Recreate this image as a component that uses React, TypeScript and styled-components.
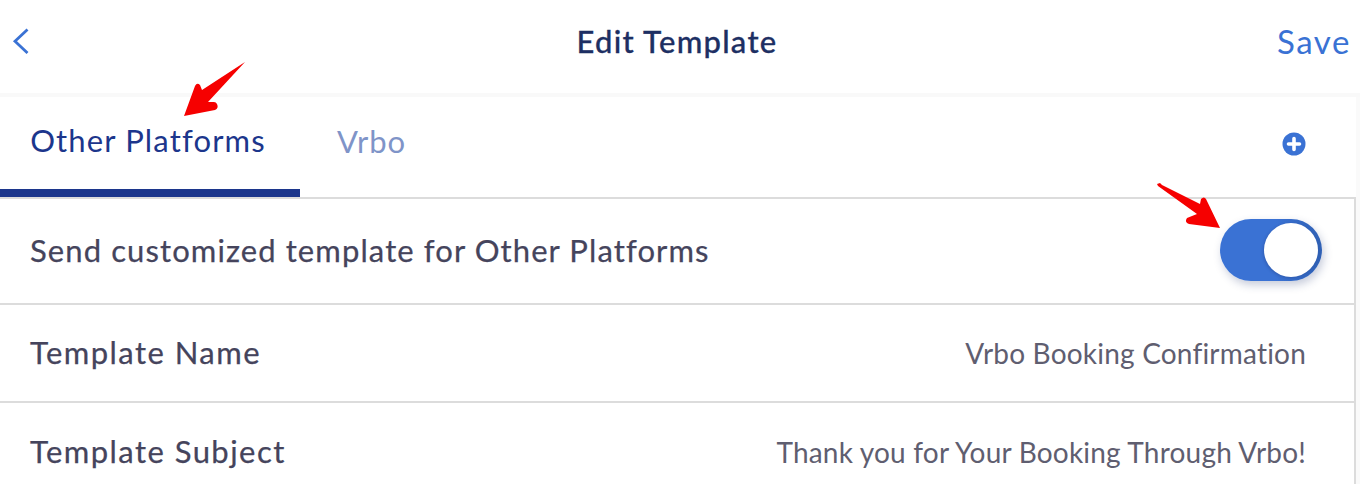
import { createGlobalStyle, styled } from "styled-components";

const Global = createGlobalStyle`
html, body {
  margin: 0;
  padding: 0;
  background: #fff;
  overflow: hidden;
}
* { box-sizing: border-box; }
`;

export default function App() {
  return (
    <Page>
      <Global />
      <Header>
        <BackBtn>
          <svg width="18" height="26" viewBox="0 0 18 26" fill="none">
            <path d="M15.5 1.5 3 13.2 15.5 25" stroke="#3a72d4" strokeWidth="2.8" />
          </svg>
        </BackBtn>
        <Title>Edit Template</Title>
        <Save>Save</Save>
      </Header>
      <Body>
        <Tabs>
          <Tab $active>Other Platforms</Tab>
          <Tab>Vrbo</Tab>
          <AddBtn>
            <svg width="24" height="24" viewBox="0 0 24 24">
              <circle cx="12" cy="12" r="11.5" fill="#3a72d4" />
              <path d="M12 6.5v11M6.5 12h11" stroke="#fff" strokeWidth="3.6" strokeLinecap="round" />
            </svg>
          </AddBtn>
        </Tabs>
        <List>
          <ToggleRow>
            <RowLabel>Send customized template for Other Platforms</RowLabel>
            <Switch>
              <Knob />
            </Switch>
          </ToggleRow>
          <NameRow>
            <FieldLabel>Template Name</FieldLabel>
            <RowValue>Vrbo Booking Confirmation</RowValue>
          </NameRow>
          <SubjectRow>
            <FieldLabel>Template Subject</FieldLabel>
            <RowValue>Thank you for Your Booking Through Vrbo!</RowValue>
          </SubjectRow>
        </List>
      </Body>
      <TabArrow width="70" height="60" viewBox="0 0 70 60">
        <path
          d="M61 1 18 29 16 24Q13 21 11 25L0 55 31 49Q35 47 33 43 32 41 30 41L24 41Z"
          fill="#f60000"
        />
      </TabArrow>
      <SwitchArrow width="70" height="50" viewBox="0 0 70 50">
        <path
          d="M1 1 4 0 6 2 44 21 45 16Q48 13 50 16L64 45 33 41Q28 39 31 35L41 31 2 3Z"
          fill="#f60000"
        />
      </SwitchArrow>
    </Page>
  );
}

const Page = styled.div`
  position: relative;
  width: 1360px;
  height: 484px;
  overflow: hidden;
  background: #fff;
  font-family: "Lato", "Noto Sans", sans-serif;
`;

const Header = styled.div`
  height: 97px;
  display: grid;
  grid-template-columns: 1fr auto 1fr;
  align-items: center;
  padding: 0 9px 12px 12px;
  border-bottom: 4px solid #f9f9f9;
`;

const BackBtn = styled.div`
  display: flex;
  width: 18px;
`;

const Title = styled.div`
  font-size: 31px;
  font-weight: 500;
  color: #1d2f63;
  margin-right: 9px;
  -webkit-text-stroke: 0.3px #1d2f63;
  letter-spacing: 1.25px;
`;

const Save = styled.div`
  font-size: 33px;
  color: #3a72d4;
  justify-self: end;
  letter-spacing: 1.6px;
`;

const Body = styled.div`
  border-right: 4px solid #fafafa;
  height: 387px;
`;

const Tabs = styled.div`
  height: 102px;
  display: flex;
  align-items: stretch;
  border-bottom: 2px solid #dcdcdc;
  padding-right: 50px;
`;

const Tab = styled.div<{ $active?: boolean }>`
  display: flex;
  align-items: center;
  justify-content: center;
  height: 100px;
  font-size: 31px;
  letter-spacing: ${({ $active }) => ($active ? "1.15px" : "0.9px")};
  width: ${({ $active }) => ($active ? "300px" : "143px")};
  padding: ${({ $active }) => ($active ? "0 4px 7px 0" : "0 0 12px")};
  color: ${({ $active }) => ($active ? "#1c368c" : "#7f94c8")};
  border-bottom: ${({ $active }) => ($active ? "8px solid #1c368c" : "none")};
`;

const AddBtn = styled.div`
  margin-left: auto;
  display: flex;
  align-items: center;
  padding-bottom: 6px;
`;

const List = styled.div`
  border-right: 2px solid #dcdcdc;
`;

const Row = styled.div`
  display: flex;
  align-items: center;
  justify-content: space-between;
  padding: 0 48px 2px 30px;
  border-bottom: 2px solid #dcdcdc;
`;

const ToggleRow = styled(Row)`
  height: 106px;
  padding-right: 32px;
`;

const NameRow = styled(Row)`
  height: 98px;
`;

const SubjectRow = styled(Row)`
  height: 98px;
  border-bottom: none;
`;

const RowLabel = styled.div`
  font-size: 31px;
  letter-spacing: 1.1px;
  color: #45445c;
  -webkit-text-stroke: 0.25px #45445c;
`;

const FieldLabel = styled(RowLabel)`
  letter-spacing: 1.45px;
`;

const RowValue = styled.div`
  font-size: 28px;
  letter-spacing: 0.2px;
  color: #5f5e70;
  padding-top: 2px;
`;

const Switch = styled.div`
  width: 102px;
  height: 62px;
  border-radius: 31px;
  background: linear-gradient(90deg, #3a72d4 55%, #2f60b4);
  display: flex;
  align-items: center;
  justify-content: flex-end;
  padding-right: 4px;
  box-shadow: 2px 4px 8px rgba(30, 50, 110, 0.25);
`;

const Knob = styled.div`
  width: 54px;
  height: 54px;
  border-radius: 50%;
  background: #fff;
  box-shadow: -1px 1px 3px rgba(30, 50, 110, 0.3);
`;

const TabArrow = styled.svg`
  position: absolute;
  left: 184px;
  top: 61px;
`;

const SwitchArrow = styled.svg`
  position: absolute;
  left: 1156px;
  top: 183px;
`;
